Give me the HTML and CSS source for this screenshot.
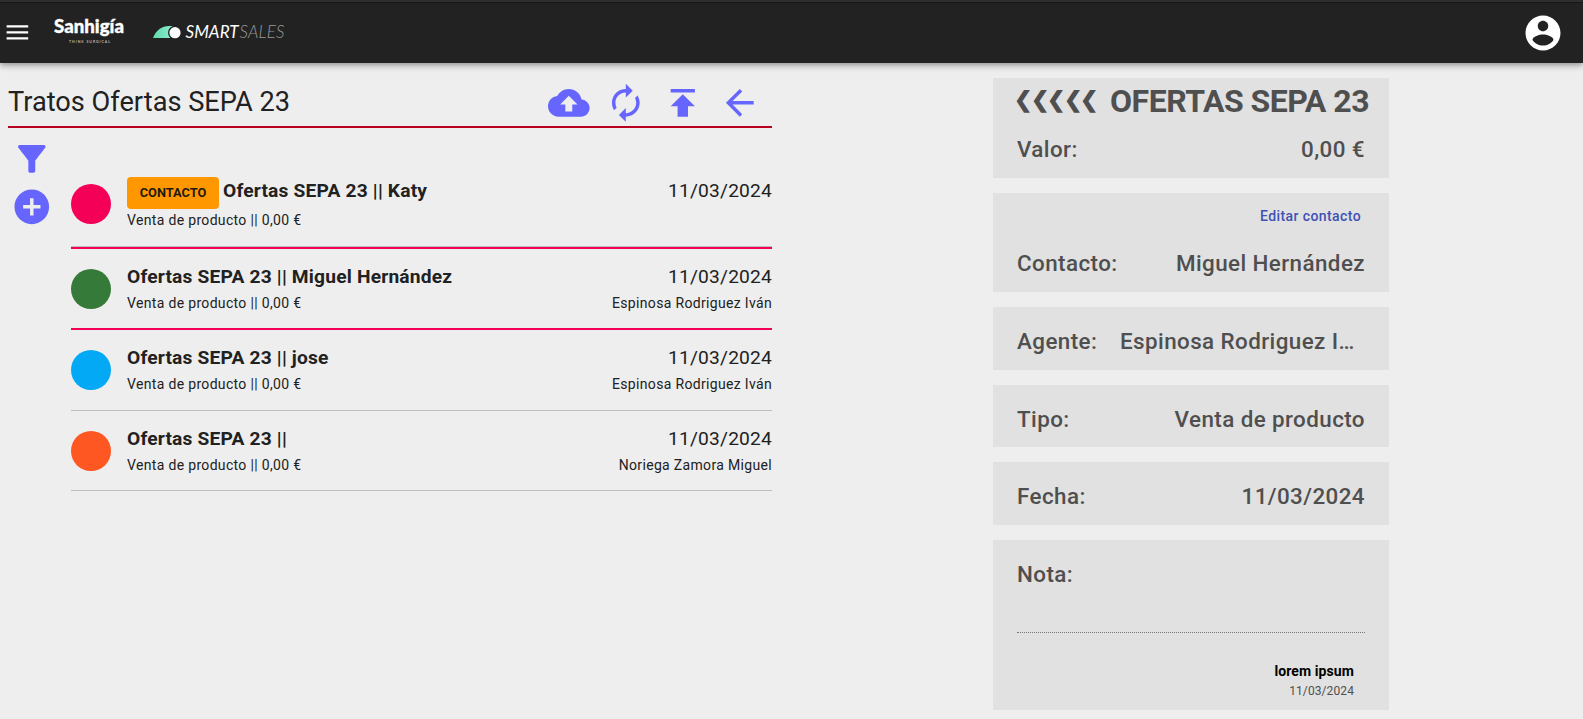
FILE: index.html
```
<!DOCTYPE html>
<html lang="es">
<head>
<meta charset="utf-8">
<title>Tratos Ofertas SEPA 23</title>
<link rel="stylesheet" href="styles.css">
</head>
<body>
<header class="appbar">
  <svg class="menu" viewBox="0 0 24 24"><path d="M3 18h18v-2H3v2zm0-5h18v-2H3v2zm0-7v2h18V6H3z"/></svg>
  <svg class="brand" viewBox="0 0 76 34">
    <text class="brand-name" x="0" y="18" textLength="70" lengthAdjust="spacingAndGlyphs">Sanhigía</text>
    <text class="brand-tag" x="15" y="28" textLength="41">THINK SURGICAL</text>
  </svg>
  <svg class="product" viewBox="0 0 134 20">
    <defs><linearGradient id="hill"><stop offset="0" stop-color="#5fd9a6"/><stop offset="1" stop-color="#8ff0d8"/></linearGradient></defs>
    <path d="M0 16C3 8 9 4 16 4h6a6.500 6.500 0 0 0-3 12z" fill="url(#hill)"/>
    <circle cx="22" cy="10.700" r="7" fill="#222"/>
    <circle cx="22" cy="10.700" r="5.600" fill="#fff"/>
    <text class="smart" x="32.500" y="16" textLength="53" lengthAdjust="spacing">SMART</text>
    <text class="sales" x="86.500" y="16" textLength="45" lengthAdjust="spacing">SALES</text>
  </svg>
  <svg class="account" viewBox="0 0 24 24"><path d="M12 2C6.480 2 2 6.480 2 12s4.480 10 10 10 10-4.480 10-10S17.520 2 12 2zm0 3c1.660 0 3 1.340 3 3s-1.340 3-3 3-3-1.340-3-3 1.340-3 3-3zm0 14.200c-2.500 0-4.710-1.280-6-3.220.03-1.990 4-3.080 6-3.080 1.990 0 5.970 1.090 6 3.080-1.290 1.940-3.500 3.220-6 3.220z"/></svg>
</header>
<main class="page">
  <section class="deals">
    <div class="toolbar">
      <h1 class="title">Tratos Ofertas SEPA 23</h1>
      <div class="actions">
        <svg class="icon" viewBox="0 0 24 24"><path d="M19.350 10.040C18.670 6.590 15.640 4 12 4 9.110 4 6.600 5.640 5.350 8.040 2.340 8.360 0 10.910 0 14c0 3.310 2.690 6 6 6h13c2.760 0 5-2.240 5-5 0-2.640-2.050-4.780-4.650-4.960zM14 13v4h-4v-4H7l5-5 5 5h-3z"/></svg>
        <svg class="icon" viewBox="0 0 24 24"><path d="M12 6v3l4-4-4-4v3c-4.420 0-8 3.580-8 8 0 1.570.46 3.030 1.240 4.260L6.700 14.800c-.45-.83-.7-1.790-.7-2.800 0-3.310 2.690-6 6-6zm6.760 1.740L17.300 9.200c.44.84.7 1.790.7 2.800 0 3.310-2.690 6-6 6v-3l-4 4 4 4v-3c4.420 0 8-3.580 8-8 0-1.570-.46-3.030-1.240-4.260z"/></svg>
        <svg class="icon" viewBox="0 0 24 24"><path d="M5 4v2h14V4H5zm0 10h4v6h6v-6h4l-7-7-7 7z"/></svg>
        <svg class="icon" viewBox="0 0 24 24"><path d="M20 11H7.830l5.590-5.590L12 4l-8 8 8 8 1.410-1.410L7.830 13H20v-2z"/></svg>
      </div>
    </div>
    <div class="body">
      <div class="side">
        <svg class="icon" viewBox="0 0 24 24"><path d="M4.250 5.610C6.270 8.200 10 13 10 13v6c0 .55.45 1 1 1h2c.55 0 1-.45 1-1v-6s3.720-4.800 5.740-7.390c.51-.66.04-1.610-.79-1.610H5.040c-.83 0-1.300.95-.79 1.610z"/></svg>
        <svg class="icon" viewBox="0 0 24 24"><path d="M12 2C6.480 2 2 6.480 2 12s4.480 10 10 10 10-4.480 10-10S17.520 2 12 2zm5 11h-4v4h-2v-4H7v-2h4V7h2v4h4v2z"/></svg>
      </div>
      <ul class="list">
        <li class="row first">
          <span class="dot pink"></span>
          <div class="text"><div class="name"><span class="badge">CONTACTO</span><span class="deal-name">Ofertas SEPA 23 || Katy</span></div><div class="sub">Venta de producto || 0,00 €</div></div>
          <div class="meta"><div class="date">11/03/2024</div></div>
        </li>
        <li class="row marked">
          <span class="dot green"></span>
          <div class="text"><div class="name">Ofertas SEPA 23 || Miguel Hernández</div><div class="sub">Venta de producto || 0,00 €</div></div>
          <div class="meta"><div class="date">11/03/2024</div><div class="sub">Espinosa Rodriguez Iván</div></div>
        </li>
        <li class="row">
          <span class="dot blue"></span>
          <div class="text"><div class="name">Ofertas SEPA 23 || jose</div><div class="sub">Venta de producto || 0,00 €</div></div>
          <div class="meta"><div class="date">11/03/2024</div><div class="sub">Espinosa Rodriguez Iván</div></div>
        </li>
        <li class="row last">
          <span class="dot orange"></span>
          <div class="text"><div class="name">Ofertas SEPA 23 ||</div><div class="sub">Venta de producto || 0,00 €</div></div>
          <div class="meta"><div class="date">11/03/2024</div><div class="sub">Noriega Zamora Miguel</div></div>
        </li>
      </ul>
    </div>
  </section>
  <aside class="detail">
    <div class="card summary">
      <div class="heading"><span class="chevrons">❮❮❮❮❮</span><h2 class="deal">OFERTAS SEPA 23</h2></div>
      <div class="field"><span>Valor:</span><span>0,00 €</span></div>
    </div>
    <div class="card contact">
      <a class="edit">Editar contacto</a>
      <div class="field"><span>Contacto:</span><span>Miguel Hernández</span></div>
    </div>
    <div class="card"><div class="field"><span>Agente:</span><span class="agent">Espinosa Rodriguez I…</span></div></div>
    <div class="card type"><div class="field"><span>Tipo:</span><span>Venta de producto</span></div></div>
    <div class="card"><div class="field"><span>Fecha:</span><span>11/03/2024</span></div></div>
    <div class="card note">
      <div class="field"><span>Nota:</span></div>
      <div class="entry"><div class="author">lorem ipsum</div><div class="when">11/03/2024</div></div>
    </div>
  </aside>
</main>
</body>
</html>
```
FILE: styles.css
```
* { box-sizing: border-box; }
body { margin: 0; height: 719px; overflow: hidden; background: #eee; color: #212121; font-family: Roboto, "Liberation Sans", sans-serif; }
h1, h2, ul { margin: 0; padding: 0; }
svg { display: block; flex: none; overflow: visible; }

.appbar { position: relative; display: flex; align-items: flex-start; height: 63px; background: #222; border-top: 2px solid #2e2e2e; box-shadow: 0 2px 4px -1px rgba(0,0,0,.2), 0 4px 5px rgba(0,0,0,.14), 0 1px 10px rgba(0,0,0,.12), inset 0 1px #171717; fill: #fff; }
.menu { width: 28.800px; height: 28.800px; margin: 16px 0 0 3.300px; }
.brand { width: 76px; height: 34px; margin: 13px 0 0 22.200px; }
.brand-name { font: 900 19.500px Lato, sans-serif; stroke: #fff; stroke-width: .4px; }
.brand-tag { font: 700 3.500px Lato, sans-serif; fill: #bbb; }
.product { width: 134px; height: 20px; margin: 20px 0 0 23px; }
.smart { font: italic 400 17px Lato, sans-serif; }
.sales { font: italic 300 17px Lato, sans-serif; fill: #999; }
.account { width: 42px; height: 42px; margin: 9.500px 18.800px 0 auto; }

.page { display: flex; align-items: flex-start; padding-left: 8px; }
.deals { width: 764px; }
.toolbar { display: flex; justify-content: space-between; height: 65px; padding-top: 18.500px; border-bottom: 2px solid #b80020; }
.title { margin-top: 4px; font-size: 27.200px; line-height: 32px; font-weight: 400; white-space: nowrap; }
.actions { display: flex; gap: 15.200px; padding-right: 11.700px; }
.icon { width: 41.600px; height: 41.600px; fill: #66f; }
.body { display: flex; }
.side { display: flex; flex-direction: column; gap: 5.800px; width: 63px; padding: 10.300px 0 0 2.800px; }
.list { flex: 1; margin-top: 36px; list-style: none; }
.row { display: flex; height: 81px; padding-top: 16px; border-bottom: 1px solid #bdbdbd; white-space: nowrap; }
.row.first { height: 85px; padding-top: 13px; border-bottom: 2px solid #f50057; box-shadow: inset 0 -1px #bdbdbd; }
.row.marked { border-bottom: 2px solid #f50057; }
.row.last { height: 80px; }
.dot { flex: none; width: 40px; height: 40px; margin: 4px 16px 0 0; border-radius: 50%; }
.first .dot { margin-top: 7px; }
.pink { background: #f50057; }
.green { background: #357a38; }
.blue { background: #03a9f4; }
.orange { background: #ff5722; }
.name { font-size: 19.200px; line-height: 23px; font-weight: 700; letter-spacing: .00938em; }
.date { font-size: 19.200px; line-height: 23px; letter-spacing: .00938em; }
.sub { margin-top: 5px; font-size: 14px; line-height: 20px; letter-spacing: .33px; }
.first .name { display: flex; height: 32px; }
.first .deal-name, .first .date { padding-top: 2px; }
.first .sub { margin-top: 1px; }
.badge { width: 92px; height: 32px; margin-right: 4px; border-radius: 4px; background: #ff9800; color: #1f1a10; font-size: 12.800px; line-height: 32px; font-weight: 700; letter-spacing: 0; text-align: center; }
.meta { margin-left: auto; text-align: right; }

.detail { display: flex; flex-direction: column; gap: 15px; width: 396px; margin: 15px 0 0 221px; color: #4f4f4f; }
.card { height: 63px; padding: 20px 24px 0; background: #e1e1e1; }
.field { display: flex; justify-content: space-between; font-size: 22.400px; line-height: 28px; font-weight: 500; letter-spacing: .0187em; white-space: nowrap; }
.summary { height: 100px; padding-top: 5px; }
.heading { display: flex; justify-content: space-between; height: 52px; margin: 0 -4px 0 -3px; white-space: nowrap; }
.chevrons { font-size: 22px; line-height: 34px; font-weight: 700; letter-spacing: -1.500px; }
.deal { font-size: 32px; line-height: 37px; font-weight: 700; letter-spacing: -.0156em; }
.contact { height: 99px; padding-top: 13px; }
.edit { display: block; margin: 0 4px 23px 0; color: #3f51b5; font-size: 14px; line-height: 20px; font-weight: 500; letter-spacing: .02857em; text-align: right; }
.agent { width: 245px; }
.type { height: 62px; }
.note { height: 170px; }
.entry { margin-top: 44px; padding: 28px 11px 0 0; border-top: 1px dotted #777; text-align: right; }
.author { color: #000; font-size: 14px; line-height: 20px; font-weight: 700; letter-spacing: .1px; }
.when { font-size: 12px; line-height: 20px; letter-spacing: .1px; }
```
